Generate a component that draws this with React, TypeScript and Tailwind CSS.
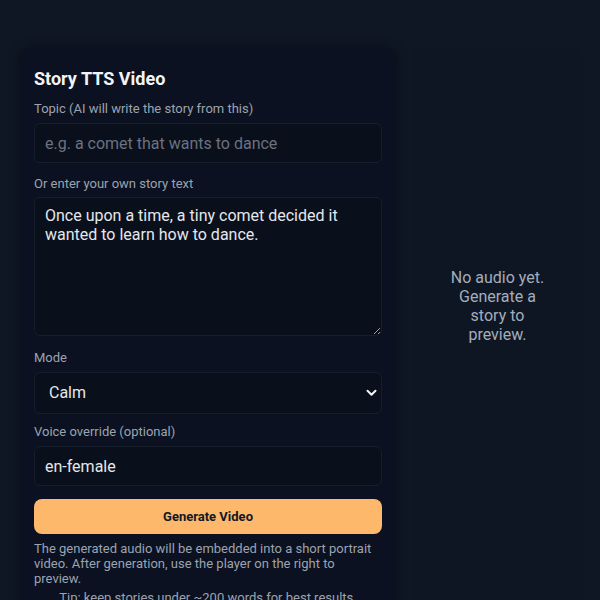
import React from "react";

export default function App() {
  return (
    <div
      className="min-h-screen w-full bg-[#0f1724] flex gap-4 pt-12 pl-5 pr-[17px] [color-scheme:dark] overflow-hidden"
      style={{ fontFamily: "Roboto, 'Liberation Sans', sans-serif" }}
    >
      <div className="w-[376px] shrink-0 rounded-xl bg-[#0b1120] shadow-[0_0_12px_rgba(0,0,0,0.35)] px-[14px] pt-[17px] pb-6 h-[600px]">
        <h1 className="text-[18px] leading-[28px] font-bold text-[#f3f4f6]">Story TTS Video</h1>

        <div className="mt-[8px]">
          <label className="block text-[13px] leading-[16px] text-[#9ca3af]">Topic (AI will write the story from this)</label>
          <input
            className="mt-[6px] block w-full h-[40px] rounded-md border border-[#161d2b] bg-[#0a0f1c] px-[10px] text-[16px] text-[#e5e7eb] placeholder:text-[#6b7280] outline-none"
            placeholder="e.g. a comet that wants to dance"
          />
        </div>

        <div className="mt-[13px]">
          <label className="block text-[13px] leading-[16px] text-[#9ca3af]">Or enter your own story text</label>
          <textarea
            className="mt-[5px] block w-full h-[139px] resize-y rounded-md border border-[#161d2b] bg-[#0a0f1c] px-[10px] py-[8px] text-[16px] leading-[19px] text-[#e5e7eb] outline-none"
            defaultValue="Once upon a time, a tiny comet decided it wanted to learn how to dance."
          />
        </div>

        <div className="mt-[14px]">
          <label className="block text-[13px] leading-[16px] text-[#9ca3af]">Mode</label>
          <div className="relative mt-[6px]">
            <select className="block w-full h-[42px] appearance-none rounded-md border border-[#161d2b] bg-[#0a0f1c] pl-[14px] pr-8 text-[16px] text-[#e5e7eb] outline-none">
              <option>Calm</option>
              <option>Energetic</option>
            </select>
            <svg
              className="pointer-events-none absolute right-[5px] top-1/2 -translate-y-1/2"
              width="11"
              height="8"
              viewBox="0 0 11 8"
              fill="none"
            >
              <path d="M1.5 1.8 L5.5 5.8 L9.5 1.8" stroke="#f3f4f6" strokeWidth="2" strokeLinecap="round" strokeLinejoin="round" />
            </svg>
          </div>
        </div>

        <div className="mt-[10px]">
          <label className="block text-[13px] leading-[16px] text-[#9ca3af]">Voice override (optional)</label>
          <input
            className="mt-[6px] block w-full h-[40px] rounded-md border border-[#161d2b] bg-[#0a0f1c] px-[10px] text-[16px] text-[#e5e7eb] outline-none"
            defaultValue="en-female"
          />
        </div>

        <button className="mt-[13px] block w-full h-[35px] rounded-lg bg-[#fdb86b] text-[13px] font-bold text-[#111827]">
          Generate Video
        </button>

        <p className="mt-[7px] text-[13px] leading-[15px] text-[#9ca3af]">
          The generated audio will be embedded into a short portrait video. After generation, use the player on the right to preview.
        </p>
        <p className="mt-[4px] text-center text-[13px] leading-[16px] text-[#9ca3af]">
          Tip: keep stories under ~200 words for best results.
        </p>
      </div>

      <div className="flex-1 h-[600px] rounded-xl bg-[#0f1623] flex flex-col items-center pt-[220px]">
        <p className="w-[104px] text-center text-[16px] leading-[19px] text-[#a3adbd]">
          No audio yet. Generate a story to preview.
        </p>
      </div>
    </div>
  );
}
